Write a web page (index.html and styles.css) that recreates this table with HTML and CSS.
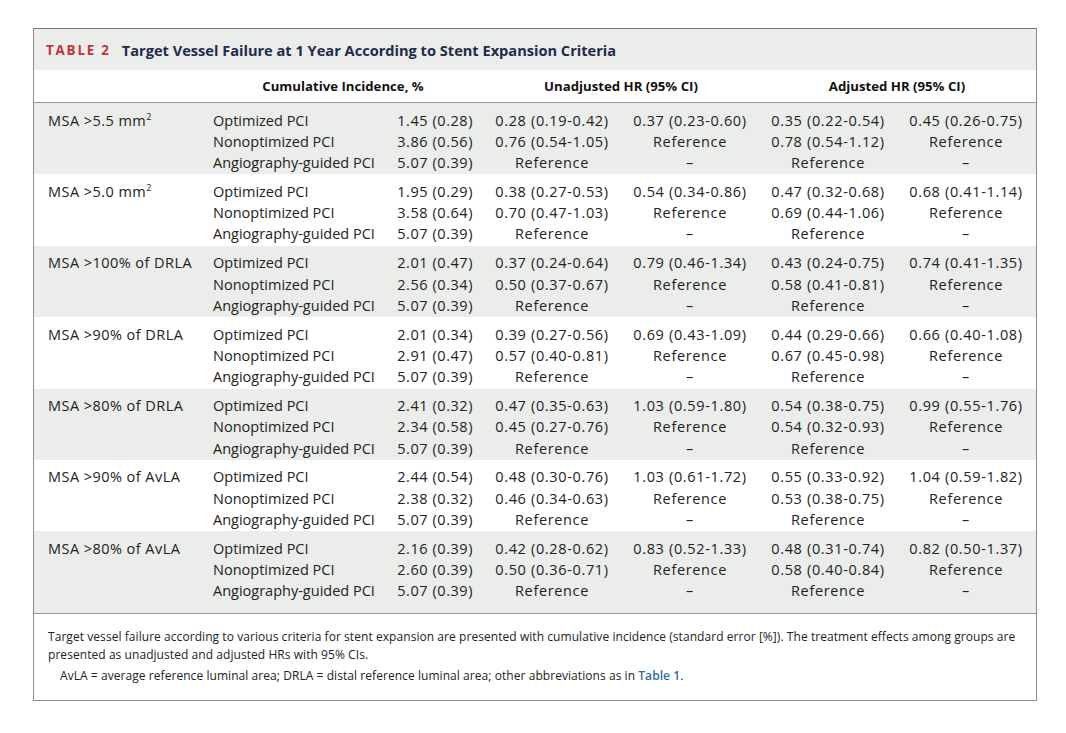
FILE: index.html
```html
<!DOCTYPE html>
<html lang="en">
<head>
    <meta http-equiv="content-type" content="text/html; charset=utf-8" />
    <title>Table 2</title>
    <link rel="stylesheet" href="styles.css">
</head>
<body>
<div class="frame">
    <div class="caption">
        <span class="label">TABLE 2</span>
        <span class="title">Target Vessel Failure at 1 Year According to Stent Expansion Criteria</span>
    </div>

    <div class="head grid">
        <div class="h-cum">Cumulative Incidence, %</div>
        <div class="h-hr">Unadjusted HR (95% CI)</div>
        <div class="h-hr">Adjusted HR (95% CI)</div>
    </div>

    <div class="group grid shade">
        <div class="crit">MSA &gt;5.5 mm<sup>2</sup></div>
        <div class="names">Optimized PCI<br>Nonoptimized PCI<br>Angiography-guided PCI</div>
        <div class="num">1.45 (0.28)<br>3.86 (0.56)<br>5.07 (0.39)</div>
        <div class="hr">0.28 (0.19-0.42)<br>0.76 (0.54-1.05)<br>Reference</div>
        <div class="hr">0.37 (0.23-0.60)<br>Reference<br>–</div>
        <div class="hr">0.35 (0.22-0.54)<br>0.78 (0.54-1.12)<br>Reference</div>
        <div class="hr">0.45 (0.26-0.75)<br>Reference<br>–</div>
    </div>

    <div class="group grid">
        <div class="crit">MSA &gt;5.0 mm<sup>2</sup></div>
        <div class="names">Optimized PCI<br>Nonoptimized PCI<br>Angiography-guided PCI</div>
        <div class="num">1.95 (0.29)<br>3.58 (0.64)<br>5.07 (0.39)</div>
        <div class="hr">0.38 (0.27-0.53)<br>0.70 (0.47-1.03)<br>Reference</div>
        <div class="hr">0.54 (0.34-0.86)<br>Reference<br>–</div>
        <div class="hr">0.47 (0.32-0.68)<br>0.69 (0.44-1.06)<br>Reference</div>
        <div class="hr">0.68 (0.41-1.14)<br>Reference<br>–</div>
    </div>

    <div class="group grid shade">
        <div class="crit">MSA &gt;100% of DRLA</div>
        <div class="names">Optimized PCI<br>Nonoptimized PCI<br>Angiography-guided PCI</div>
        <div class="num">2.01 (0.47)<br>2.56 (0.34)<br>5.07 (0.39)</div>
        <div class="hr">0.37 (0.24-0.64)<br>0.50 (0.37-0.67)<br>Reference</div>
        <div class="hr">0.79 (0.46-1.34)<br>Reference<br>–</div>
        <div class="hr">0.43 (0.24-0.75)<br>0.58 (0.41-0.81)<br>Reference</div>
        <div class="hr">0.74 (0.41-1.35)<br>Reference<br>–</div>
    </div>

    <div class="group grid">
        <div class="crit">MSA &gt;90% of DRLA</div>
        <div class="names">Optimized PCI<br>Nonoptimized PCI<br>Angiography-guided PCI</div>
        <div class="num">2.01 (0.34)<br>2.91 (0.47)<br>5.07 (0.39)</div>
        <div class="hr">0.39 (0.27-0.56)<br>0.57 (0.40-0.81)<br>Reference</div>
        <div class="hr">0.69 (0.43-1.09)<br>Reference<br>–</div>
        <div class="hr">0.44 (0.29-0.66)<br>0.67 (0.45-0.98)<br>Reference</div>
        <div class="hr">0.66 (0.40-1.08)<br>Reference<br>–</div>
    </div>

    <div class="group grid shade">
        <div class="crit">MSA &gt;80% of DRLA</div>
        <div class="names">Optimized PCI<br>Nonoptimized PCI<br>Angiography-guided PCI</div>
        <div class="num">2.41 (0.32)<br>2.34 (0.58)<br>5.07 (0.39)</div>
        <div class="hr">0.47 (0.35-0.63)<br>0.45 (0.27-0.76)<br>Reference</div>
        <div class="hr">1.03 (0.59-1.80)<br>Reference<br>–</div>
        <div class="hr">0.54 (0.38-0.75)<br>0.54 (0.32-0.93)<br>Reference</div>
        <div class="hr">0.99 (0.55-1.76)<br>Reference<br>–</div>
    </div>

    <div class="group grid">
        <div class="crit">MSA &gt;90% of AvLA</div>
        <div class="names">Optimized PCI<br>Nonoptimized PCI<br>Angiography-guided PCI</div>
        <div class="num">2.44 (0.54)<br>2.38 (0.32)<br>5.07 (0.39)</div>
        <div class="hr">0.48 (0.30-0.76)<br>0.46 (0.34-0.63)<br>Reference</div>
        <div class="hr">1.03 (0.61-1.72)<br>Reference<br>–</div>
        <div class="hr">0.55 (0.33-0.92)<br>0.53 (0.38-0.75)<br>Reference</div>
        <div class="hr">1.04 (0.59-1.82)<br>Reference<br>–</div>
    </div>

    <div class="group grid shade last">
        <div class="crit">MSA &gt;80% of AvLA</div>
        <div class="names">Optimized PCI<br>Nonoptimized PCI<br>Angiography-guided PCI</div>
        <div class="num">2.16 (0.39)<br>2.60 (0.39)<br>5.07 (0.39)</div>
        <div class="hr">0.42 (0.28-0.62)<br>0.50 (0.36-0.71)<br>Reference</div>
        <div class="hr">0.83 (0.52-1.33)<br>Reference<br>–</div>
        <div class="hr">0.48 (0.31-0.74)<br>0.58 (0.40-0.84)<br>Reference</div>
        <div class="hr">0.82 (0.50-1.37)<br>Reference<br>–</div>
    </div>

    <div class="notes">
        <p>Target vessel failure according to various criteria for stent expansion are presented with cumulative incidence (standard error [%]). The treatment effects among groups are presented as unadjusted and adjusted HRs with 95% CIs.</p>
        <p class="abbr">AvLA = average reference luminal area; DRLA = distal reference luminal area; other abbreviations as in <a class="ref">Table 1</a>.</p>
    </div>
</div>
</body>
</html>
```

FILE: styles.css
```css
body {
    margin: 0;
    background: #fff;
    font-family: "Open Sans", "Noto Sans", sans-serif;
    color: #222;
}
.frame {
    margin: 28px 0 0 33px;
    width: 1002px;
    border: 1px solid #8c8c8c;
    border-top-color: #777;
}
.caption {
    background: #eaedea;
    height: 41px;
    display: flex;
    align-items: center;
    padding-left: 12px;
    gap: 11px;
    font-weight: 700;
    font-size: 14.6px;
}
.caption .label {
    color: #c4343e;
    font-size: 13.4px;
    letter-spacing: 1.8px;
}
.caption .title {
    color: #1e2b4d;
}
.grid {
    display: grid;
    grid-template-columns: 179px 172px 98px repeat(4, 138px);
}
.head {
    height: 32px;
    align-items: center;
    border-bottom: 1px solid #9a9a9a;
    font-weight: 700;
    font-size: 13.2px;
    color: #111;
}
.h-cum {
    grid-column: 2 / span 2;
    text-align: center;
    padding-right: 10px;
}
.h-hr {
    grid-column: span 2;
    text-align: center;
}
.group {
    font-size: 14.5px;
    line-height: 21.3px;
    padding: 6.5px 0 1px;
}
.group.shade {
    background: #eaedea;
}
.group.last {
    padding-bottom: 11px;
    border-bottom: 1px solid #9a9a9a;
}
.crit {
    padding-left: 14px;
    letter-spacing: 0.45px;
}
.crit sup {
    font-size: 9px;
    line-height: 0;
    vertical-align: 6px;
}
.num {
    text-align: right;
    padding-right: 10px;
    letter-spacing: 0.55px;
}
.hr {
    text-align: center;
    letter-spacing: 0.65px;
}
.notes {
    padding: 14px 14px 15px;
    font-size: 12px;
    line-height: 18px;
    letter-spacing: 0.06px;
    color: #222;
}
.notes p {
    margin: 0;
}
.notes .abbr {
    margin-top: 3px;
    padding-left: 12px;
}
.notes .ref {
    color: #2a6fa8;
    font-weight: 600;
}
```
